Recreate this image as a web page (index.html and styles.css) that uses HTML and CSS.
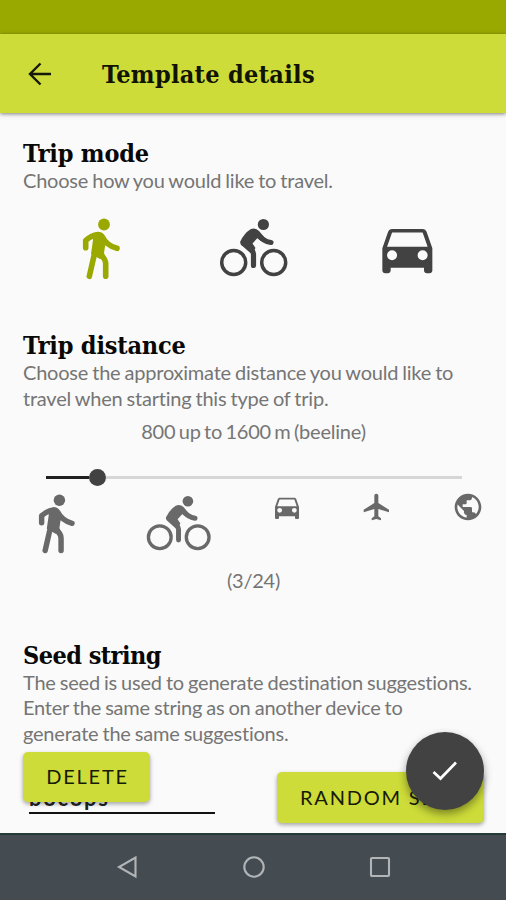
FILE: index.html
```html
<!DOCTYPE html>
<html lang="en">
<head>
<meta charset="utf-8">
<title>Template details</title>
<link rel="stylesheet" href="styles.css">
</head>
<body>
<svg class="defs" width="0" height="0" aria-hidden="true">
  <symbol id="walk" viewBox="78 214 46 70">
    <circle cx="104" cy="224.5" r="5.9" fill="currentColor"/>
    <path d="M92 235Q98 230 102.500 233L107 240L105 246.500L104 253L105.500 257L100 259L91 254L93 240Z" fill="currentColor"/>
    <path d="M85.700 247.800V240.500Q91 235.500 98 234.500M102 236.500Q107 246 117 248.300M96.500 245L89.300 276.300M98.500 253.500Q105.500 258 105.700 263.500V276.300" fill="none" stroke="currentColor" stroke-width="5.600" stroke-linecap="round" stroke-linejoin="round"/>
  </symbol>
  <symbol id="bike" viewBox="216 214 76 66">
    <circle cx="263.400" cy="224.500" r="5.600" fill="currentColor"/>
    <circle cx="233.700" cy="262.500" r="12" fill="none" stroke="currentColor" stroke-width="3.500"/>
    <circle cx="273.700" cy="262.500" r="12" fill="none" stroke="currentColor" stroke-width="3.500"/>
    <path d="M240.300 241.500Q244 233.500 250.500 229.300Q255 227 259 231L265 238L261 241L257.500 238L252.500 243.500L255.500 248L251.500 254L243 246.500Q239.500 244.500 240.300 241.500Z" fill="currentColor"/>
    <path d="M256 232.500Q263 241.500 271 242.500M244.500 243Q253.500 249.500 253.500 254V265.500" fill="none" stroke="currentColor" stroke-width="5.200" stroke-linecap="round" stroke-linejoin="round"/>
  </symbol>
  <symbol id="car" viewBox="0 0 24 24">
    <path fill="currentColor" fill-rule="evenodd" d="M18.920 6.010C18.720 5.420 18.160 5 17.500 5h-11c-.66 0-1.210.42-1.420 1.010L3 12v8c0 .55.45 1 1 1h1c.55 0 1-.45 1-1v-1h12v1c0 .55.45 1 1 1h1c.55 0 1-.45 1-1v-8zM6.500 16.300a1.800 1.800 0 1 1 0-3.600 1.800 1.800 0 0 1 0 3.600zm11 0a1.800 1.800 0 1 1 0-3.600 1.800 1.800 0 0 1 0 3.600zM4.700 11.400l1.800-5.100h11l1.800 5.100z"/>
  </symbol>
</svg>
<div class="screen">
  <div class="status"></div>
  <header class="appbar">
    <svg class="back" viewBox="0 0 24 24" fill="none" stroke="#17190a" stroke-width="2.400"><path d="M23 12H2M12.500 1.500L2 12l10.500 10.500"/></svg>
    <h1 class="slab title">Template details</h1>
  </header>
  <main class="content">
    <section class="mode">
      <h2 class="slab h-mode">Trip mode</h2>
      <p class="text">Choose how you would like to travel.</p>
      <div class="modes">
        <svg class="m-walk"><use href="#walk"/></svg>
        <svg class="m-bike"><use href="#bike"/></svg>
        <svg class="m-car"><use href="#car"/></svg>
      </div>
    </section>
    <section class="distance">
      <h2 class="slab h-distance">Trip distance</h2>
      <p class="text">Choose the approximate distance you would like to<br>travel when starting this type of trip.</p>
      <p class="text value">800 up to 1600 m (beeline)</p>
      <div class="slider"><span class="filled"></span><span class="thumb"></span><span class="rest"></span></div>
      <div class="scale">
        <svg class="s-walk"><use href="#walk"/></svg>
        <svg class="s-bike"><use href="#bike"/></svg>
        <svg class="s-car"><use href="#car"/></svg>
        <svg class="s-plane" viewBox="0 0 24 24"><path fill="currentColor" d="M21 16v-2l-8-5V3.500c0-.83-.67-1.500-1.500-1.500S10 2.670 10 3.500V9l-8 5v2l8-2.500V19l-2 1.500V22l3.500-1 3.500 1v-1.500L13 19v-5.500l8 2.500z"/></svg>
        <svg class="s-globe" viewBox="0 0 24 24"><path fill="currentColor" d="M12 2C6.480 2 2 6.480 2 12s4.480 10 10 10 10-4.480 10-10S17.520 2 12 2zm-1 17.930c-3.950-.49-7-3.850-7-7.930 0-.62.08-1.210.21-1.790L9 15v1c0 1.100.9 2 2 2v1.930zm6.900-2.540c-.26-.81-1-1.390-1.900-1.390h-1v-3c0-.55-.45-1-1-1H8v-2h2c.55 0 1-.45 1-1V7h2c1.100 0 2-.9 2-2v-.41c2.930 1.190 5 4.060 5 7.410 0 2.080-.8 3.970-2.100 5.390z"/></svg>
      </div>
      <p class="text step">(3/24)</p>
    </section>
    <section class="seed">
      <h2 class="slab h-seed">Seed string</h2>
      <p class="text">The seed is used to generate destination suggestions.<br>Enter the same string as on another device to<br>generate the same suggestions.</p>
      <div class="seedrow">
        <div class="field">bocops</div>
        <button class="btn random">RANDOM SEED</button>
      </div>
    </section>
    <button class="btn delete">DELETE</button>
    <button class="fab"><svg viewBox="0 0 26 20" fill="none" stroke="#fff" stroke-width="2.700"><path d="M1.500 11L8.500 17.500L24 1.500"/></svg></button>
  </main>
  <nav class="navbar">
    <svg viewBox="0 0 24 24"><path d="M19.500 2.500V21.500L3 12Z"/></svg>
    <svg viewBox="0 0 24 24"><circle cx="12" cy="12" r="9.700"/></svg>
    <svg viewBox="0 0 24 24"><rect x="3" y="3" width="18" height="18" rx="1"/></svg>
  </nav>
</div>
</body>
</html>
```
FILE: styles.css
```css
* { box-sizing: border-box; }
body { margin: 0; font-family: Lato, "Liberation Sans", sans-serif; font-variant-ligatures: none; }
h1, h2, p { margin: 0; }
svg { display: block; flex: none; }
.defs { position: absolute; }
.screen { display: flex; flex-direction: column; width: 506px; height: 900px; overflow: hidden; background: #fafafa; }
.status { height: 34px; background: #9aa900; flex: none; }
.appbar { height: 79px; flex: none; display: flex; align-items: center; padding-left: 28px; background: #cddc39; box-shadow: 0 1px 4px rgba(0,0,0,.5); }
.back { width: 24px; height: 24px; }
.slab { font-family: "DejaVu Serif Condensed", "DejaVu Serif", serif; font-stretch: condensed; font-weight: 700; font-size: 25px; line-height: 30px; letter-spacing: -.2px; color: #080808; white-space: nowrap; }
.title { margin: 2px 0 0 50px; letter-spacing: .3px; color: #111303; }
.h-seed { letter-spacing: -.55px; }
.content { position: relative; height: 720px; flex: none; padding: 26px 22px 0 23px; }
.text { margin-top: -1px; font-size: 20px; line-height: 25.7px; letter-spacing: -.22px; word-spacing: -.8px; color: #757575; white-space: nowrap; }
.mode { height: 192px; }
.modes { display: flex; padding: 20px 0 0 55px; color: #424242; }
.m-walk { width: 46px; height: 70px; color: #9aa900; }
.m-bike { width: 76px; height: 66px; margin-left: 92px; }
.m-car { width: 66.700px; height: 66.700px; margin: 1px 0 0 82px; }
.distance { height: 309.500px; }
.value { text-align: center; margin-top: 8px; word-spacing: -1.500px; }
.slider { display: flex; align-items: center; height: 18px; margin: 23px 22px 0 23px; }
.filled { width: 43px; height: 3px; background: #202020; }
.thumb { width: 17px; height: 17px; border-radius: 50%; background: #424242; }
.rest { flex: 1; height: 3px; background: #d6d6d6; }
.scale { display: flex; height: 70px; padding-left: 11px; margin-top: 5px; color: #696969; }
.s-walk { width: 45px; height: 68px; margin-top: -1px; }
.s-bike { width: 72px; height: 63px; margin: 0 0 0 64px; }
.s-car { width: 32px; height: 32px; margin: 0 0 0 55.500px; }
.s-plane { width: 32px; height: 32px; margin-left: 58.500px; }
.s-globe { width: 32px; height: 32px; margin-left: 58.500px; }
.step { text-align: center; margin-top: 7px; }
.seedrow { display: flex; justify-content: space-between; align-items: flex-start; margin-top: 25.500px; }
.field { width: 186px; height: 42px; margin-left: 6px; padding-top: 12px; border-bottom: 2px solid #111; font-size: 22px; line-height: 28px; letter-spacing: 1.700px; font-weight: 700; color: #222; }
.btn { border: 0; border-radius: 5px; background: #cddc39; font-family: Lato, sans-serif; font-size: 20px; letter-spacing: 1.800px; color: #171a05; box-shadow: 0 2px 4px rgba(0,0,0,.35); white-space: nowrap; padding: 0 0 2px; }
.random { width: 207px; height: 51px; text-align: left; padding-left: 23px; }
.delete { position: absolute; left: 23px; top: 639px; width: 127px; height: 50px; padding-left: 2px; }
.fab { position: absolute; left: 406px; top: 619px; width: 78px; height: 78px; border: 0; border-radius: 50%; background: #424242; box-shadow: 0 4px 8px rgba(0,0,0,.4); display: grid; place-items: center; padding: 0; }
.fab svg { width: 26px; height: 20px; }
.navbar { position: relative; height: 67px; flex: none; display: flex; justify-content: center; align-items: center; gap: 102px; padding: 0 0 2px 1px; border-top: 2px solid #233a39; background: #454c51; }
.navbar svg { width: 24px; height: 24px; fill: none; stroke: #b2b5b7; stroke-width: 2.100; }
```
